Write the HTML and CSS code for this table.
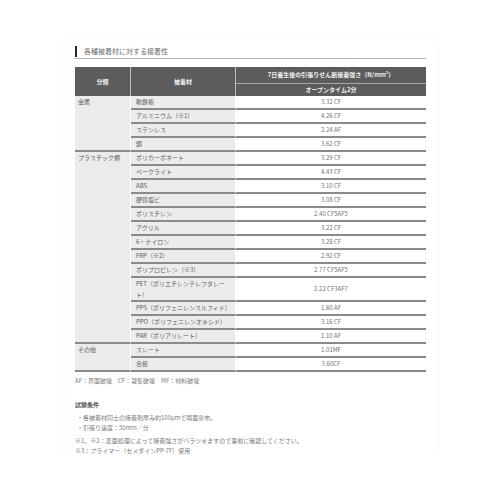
FILE: index.html
```html
<!DOCTYPE html>
<html lang="ja">
<head>
<meta charset="utf-8">
<link rel="stylesheet" href="styles.css">
</head>
<body>
<div class="panel">
  <div class="title"><span class="title-text">各種被着材に対する接着性</span></div>
  <table class="adh">
    <colgroup><col class="c1"><col class="c2"><col class="c3"></colgroup>
    <thead>
      <tr>
        <th rowspan="2" class="h-left">分類</th>
        <th rowspan="2" class="h-left">被着材</th>
        <th class="h-top">7日養生後の引張りせん断接着強さ（N/mm<sup>2</sup>）</th>
      </tr>
      <tr><th class="h-sub">オープンタイム2分</th></tr>
    </thead>
    <tbody>
      <tr><td rowspan="4" class="cat">金属</td><td class="mat">軟鉄板</td><td class="val">3.32 CF</td></tr>
      <tr><td class="mat">アルミニウム（※1）</td><td class="val">4.26 CF</td></tr>
      <tr><td class="mat">ステンレス</td><td class="val">2.24 AF</td></tr>
      <tr><td class="mat">銅</td><td class="val">3.62 CF</td></tr>
      <tr><td rowspan="13" class="cat">プラスチック類</td><td class="mat">ポリカーボネート</td><td class="val">3.29 CF</td></tr>
      <tr><td class="mat">ベークライト</td><td class="val">4.43 CF</td></tr>
      <tr><td class="mat">ABS</td><td class="val">3.10 CF</td></tr>
      <tr><td class="mat">硬質塩ビ</td><td class="val">3.08 CF</td></tr>
      <tr><td class="mat">ポリスチレン</td><td class="val">2.40 CF5AF5</td></tr>
      <tr><td class="mat">アクリル</td><td class="val">3.22 CF</td></tr>
      <tr><td class="mat">6・ナイロン</td><td class="val">3.28 CF</td></tr>
      <tr><td class="mat">FRP（※2）</td><td class="val">2.92 CF</td></tr>
      <tr><td class="mat">ポリプロピレン（※3）</td><td class="val">2.77 CF5AF5</td></tr>
      <tr><td class="mat two">PET（ポリエチレンテレフタレー<br>ト）</td><td class="val">2.22 CF3AF7</td></tr>
      <tr><td class="mat">PPS（ポリフェニレンスルフィド）</td><td class="val">1.60 AF</td></tr>
      <tr><td class="mat">PPO（ポリフェニレンオキシド）</td><td class="val">3.16 CF</td></tr>
      <tr><td class="mat">PAR（ポリアリレート）</td><td class="val">1.10 AF</td></tr>
      <tr><td rowspan="2" class="cat">その他</td><td class="mat">スレート</td><td class="val">1.01MF</td></tr>
      <tr><td class="mat">合板</td><td class="val">3.60CF</td></tr>
    </tbody>
  </table>
  <p class="legend">AF：界面破壊　CF：凝集破壊　MF：材料破壊</p>
  <div class="conditions">
    <p class="cond-head">試験条件</p>
    <p class="cond-item">・各被着材同士の接着剤厚み約100μmで両面塗布。</p>
    <p class="cond-item">・引張り速度：50mm／分</p>
    <p class="note first">※1、※2：表面処理によって接着強さがバラツキますので事前に確認してください。</p>
    <p class="note">※3：プライマー（セメダインPP-7F）使用</p>
  </div>
</div>
</body>
</html>
```

FILE: styles.css
```css
html, body {
  margin: 0;
  padding: 0;
  background: #ffffff;
}

body {
  font-family: "Noto Sans CJK JP", "Noto Sans", sans-serif;
  color: #666666;
}

.panel {
  margin: 40px 0 0 65px;
  width: 351px;
  height: 411px;
  padding: 6px 11px 0 10px;
  box-shadow: 0 0 3px rgba(0, 0, 0, 0.05);
}

.title {
  border-bottom: 1px solid #b4b4b4;
  padding-bottom: 1px;
}

.title-text {
  display: block;
  border-left: 2px solid #232842;
  padding-left: 7px;
  font-size: 7px;
  line-height: 11px;
  height: 11px;
  color: #6e6e6e;
}

.adh {
  margin-top: 8px;
  width: 351px;
  table-layout: fixed;
  border-collapse: separate;
  border-spacing: 0;
  font-size: 6px;
}

.c1 { width: 56px; }
.c2 { width: 105px; }
.c3 { width: 190px; }

.adh th {
  background: #5c5c5c;
  color: #f2f2f2;
  font-weight: bold;
  padding: 0;
  text-align: center;
  border-right: 1px solid #bdbdbd;
}

.adh th:last-child,
.h-top,
.h-sub {
  border-right: none;
}

.h-left {
  height: 29px;
}

.h-top {
  height: 16px;
  line-height: 16px;
  border-bottom: 1px solid #a8a8a8;
}

.h-top sup {
  font-size: 4px;
  line-height: 0;
}

.h-sub {
  height: 12px;
  line-height: 12px;
}

.adh td {
  padding: 0;
  line-height: 12px;
  border-bottom: 2px solid #8a8a8a;
  white-space: nowrap;
}

.cat {
  background: #ebebeb;
  vertical-align: top;
  padding: 0 0 0 3px !important;
  color: #5c5c5c;
  border-right: 1px solid #ffffff;
}

.mat {
  background: #ececec;
  padding-left: 5px !important;
  color: #5c5c5c;
  border-right: 1px solid #ffffff;
}

.mat.two {
  line-height: 11px !important;
}

.val {
  text-align: center;
  color: #707070;
  background: #ffffff;
}

.legend {
  margin: 4px 0 0;
  font-size: 6px;
  line-height: 10px;
  color: #7a7a7a;
}

.conditions {
  margin-top: 14px;
  font-size: 6px;
  line-height: 10px;
  color: #7a7a7a;
}

.conditions p {
  margin: 0;
}

.cond-head {
  color: #555555;
  font-weight: bold;
  margin-bottom: 3px !important;
}

.cond-item {
  padding-left: 2px;
}

.note.first {
  margin-top: 3px;
}
```
